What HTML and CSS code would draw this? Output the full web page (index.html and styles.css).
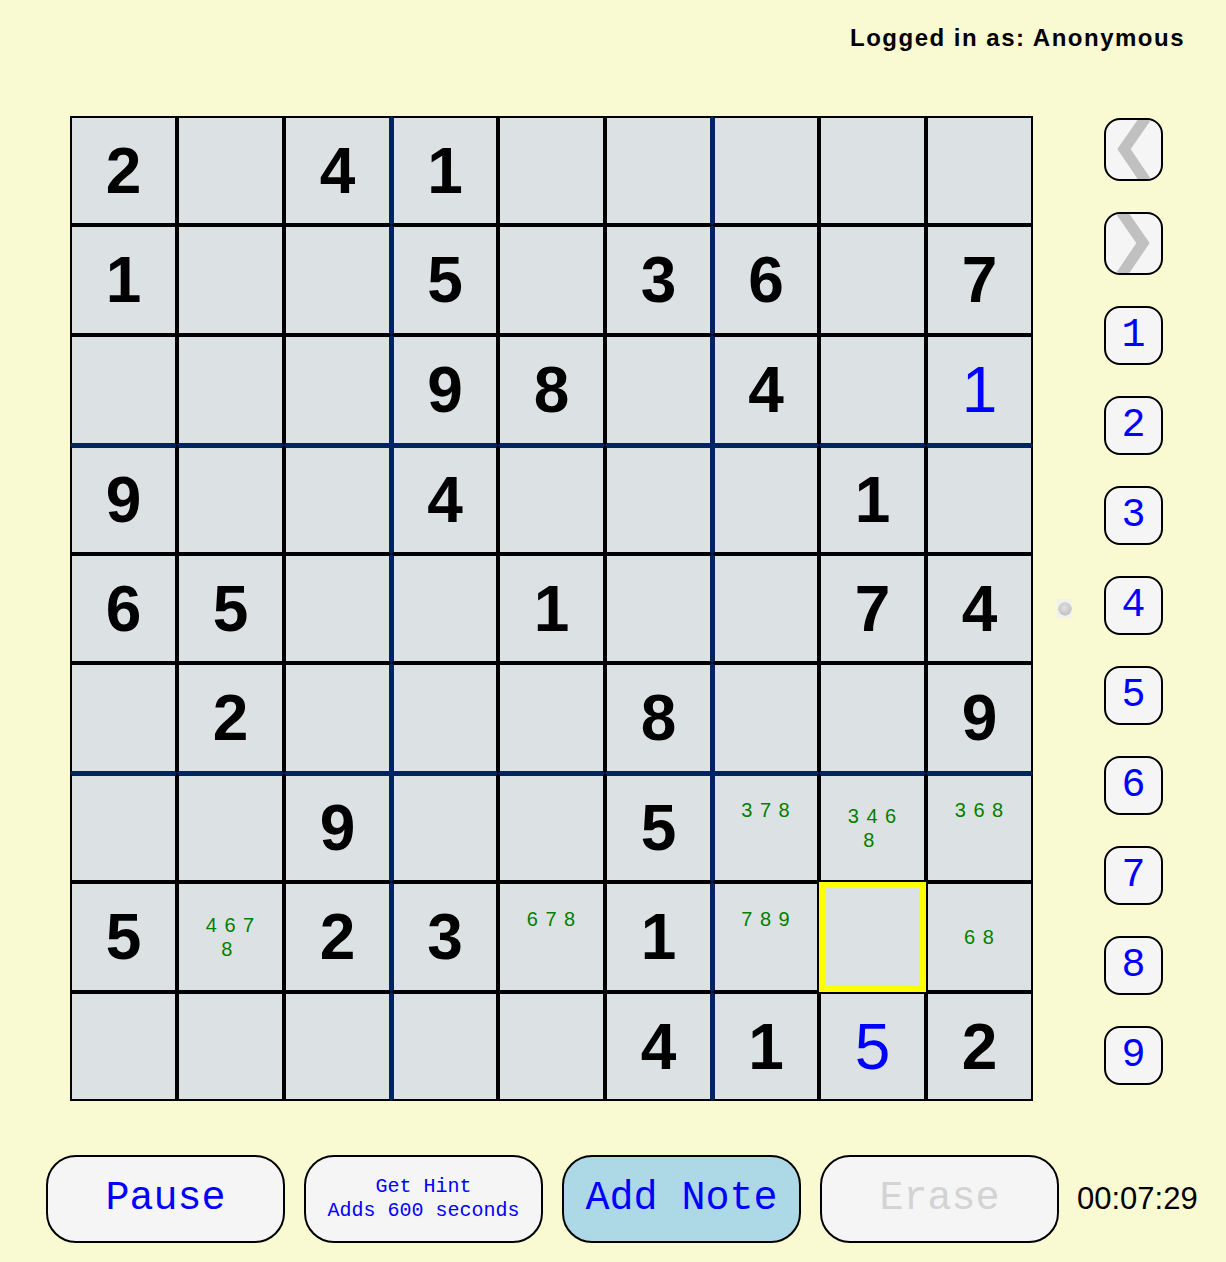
FILE: index.html
```html
<!DOCTYPE html>
<html>
<head>
<meta charset="utf-8">
<title>Sudoku</title>
<link rel="stylesheet" href="styles.css">
</head>
<body>
<div class="page">
  <header class="topbar"><span class="login">Logged in as: Anonymous</span></header>
  <main class="board-area">
    <div class="board">
      <div class="cell given">2</div><div class="cell"></div><div class="cell given">4</div><div class="cell given">1</div><div class="cell"></div><div class="cell"></div><div class="cell"></div><div class="cell"></div><div class="cell"></div>
      <div class="cell given">1</div><div class="cell"></div><div class="cell"></div><div class="cell given">5</div><div class="cell"></div><div class="cell given">3</div><div class="cell given">6</div><div class="cell"></div><div class="cell given">7</div>
      <div class="cell"></div><div class="cell"></div><div class="cell"></div><div class="cell given">9</div><div class="cell given">8</div><div class="cell"></div><div class="cell given">4</div><div class="cell"></div><div class="cell entered">1</div>
      <div class="cell given">9</div><div class="cell"></div><div class="cell"></div><div class="cell given">4</div><div class="cell"></div><div class="cell"></div><div class="cell"></div><div class="cell given">1</div><div class="cell"></div>
      <div class="cell given">6</div><div class="cell given">5</div><div class="cell"></div><div class="cell"></div><div class="cell given">1</div><div class="cell"></div><div class="cell"></div><div class="cell given">7</div><div class="cell given">4</div>
      <div class="cell"></div><div class="cell given">2</div><div class="cell"></div><div class="cell"></div><div class="cell"></div><div class="cell given">8</div><div class="cell"></div><div class="cell"></div><div class="cell given">9</div>
      <div class="cell"></div><div class="cell"></div><div class="cell given">9</div><div class="cell"></div><div class="cell"></div><div class="cell given">5</div><div class="cell"><span class="note lift">3 7 8</span></div><div class="cell"><span class="note">3 4 6<br>8&nbsp;</span></div><div class="cell"><span class="note lift">3 6 8</span></div>
      <div class="cell given">5</div><div class="cell"><span class="note">4 6 7<br>8&nbsp;</span></div><div class="cell given">2</div><div class="cell given">3</div><div class="cell"><span class="note lift">6 7 8</span></div><div class="cell given">1</div><div class="cell"><span class="note lift">7 8 9</span></div><div class="cell sel"></div><div class="cell"><span class="note">6 8</span></div>
      <div class="cell"></div><div class="cell"></div><div class="cell"></div><div class="cell"></div><div class="cell"></div><div class="cell given">4</div><div class="cell given">1</div><div class="cell entered">5</div><div class="cell given">2</div>
    </div>
    <nav class="side">
      <button class="side-btn arrow"><svg class="chev" viewBox="0 0 55 59" width="55" height="59"><polyline points="41,-4 18,29 41,63" /></svg></button>
      <button class="side-btn arrow"><svg class="chev" viewBox="0 0 55 59" width="55" height="59"><polyline points="14,-4 37,29 14,63" /></svg></button>
      <button class="side-btn num">1</button>
      <button class="side-btn num">2</button>
      <button class="side-btn num">3</button>
      <button class="side-btn num has-radio">4<span class="radio"><span class="dot"></span></span></button>
      <button class="side-btn num">5</button>
      <button class="side-btn num">6</button>
      <button class="side-btn num">7</button>
      <button class="side-btn num">8</button>
      <button class="side-btn num">9</button>
    </nav>
  </main>
  <footer class="controls">
    <button class="ctl">Pause</button>
    <button class="ctl hint">Get Hint<br>Adds 600 seconds</button>
    <button class="ctl active">Add Note</button>
    <button class="ctl disabled">Erase</button>
    <span class="timer">00:07:29</span>
  </footer>
</div>
</body>
</html>
```

FILE: styles.css
```css
html, body {
  margin: 0;
  padding: 0;
  background: #fafad2;
}
body {
  font-family: "Liberation Sans", Arial, sans-serif;
}
.page {
  width: 1226px;
  height: 1262px;
  overflow: hidden;
}
.topbar {
  display: flex;
  justify-content: flex-end;
  padding: 24px 41px 0 0;
  height: 28px;
}
.login {
  font-size: 24px;
  line-height: 28px;
  font-weight: bold;
  letter-spacing: 1.5px;
  color: #000;
}
.board-area {
  display: flex;
  align-items: flex-start;
  padding-left: 70px;
  margin-top: 64px;
}
.board {
  display: grid;
  grid-template-columns: repeat(9, 107px);
  grid-template-rows: 109px 110px 110px 109px 109px 110px 109px 110px 109px;
}
.cell {
  box-sizing: border-box;
  border: 2px solid #000;
  background: #dce2e3;
  display: flex;
  align-items: center;
  justify-content: center;
  font-size: 64px;
  line-height: 1;
}
/* box lines */
.cell:nth-child(9n+3), .cell:nth-child(9n+6) {
  border-right-color: #002366;
}
.cell:nth-child(9n+4), .cell:nth-child(9n+7) {
  border-left: 3px solid #002366;
}
.cell:nth-child(n+19):nth-child(-n+27),
.cell:nth-child(n+46):nth-child(-n+54) {
  border-bottom-color: #002366;
}
.cell:nth-child(n+28):nth-child(-n+36),
.cell:nth-child(n+55):nth-child(-n+63) {
  border-top: 3px solid #002366;
}
.given {
  font-weight: bold;
  color: #000;
}
.entered {
  font-weight: normal;
  color: #0000ff;
}
.note {
  font-size: 20px;
  line-height: 24px;
  letter-spacing: 1px;
  color: #008000;
  text-align: center;
}
.note.lift {
  margin-bottom: 36px;
}
.cell.sel {
  border-color: #ffff00;
  box-shadow: inset 0 0 0 4px #ffff00;
}
.side {
  display: flex;
  flex-direction: column;
  gap: 31px;
  margin-left: 71px;
  padding-top: 2px;
}
.side-btn {
  box-sizing: border-box;
  width: 59px;
  height: 59px;
  margin: 0;
  padding: 0;
  border: 2px solid #000;
  border-radius: 16px;
  background: #f5f5f5;
  font-family: "Liberation Mono", "Courier New", monospace;
  font-size: 40px;
  color: #0000ff;
  line-height: 1;
  display: flex;
  align-items: center;
  justify-content: center;
}
.side-btn.arrow {
  height: 63px;
  overflow: hidden;
}
.chev {
  display: block;
  flex: none;
}
.chev polyline {
  fill: none;
  stroke: #c0c0c0;
  stroke-width: 11;
  stroke-linejoin: miter;
}
.has-radio {
  position: relative;
}
.radio {
  position: absolute;
  left: -49px;
  top: 21px;
  width: 15px;
  height: 19px;
  background: #f1f1ee;
  display: flex;
  align-items: center;
  justify-content: center;
}
.dot {
  width: 12px;
  height: 12px;
  border-radius: 50%;
  background: radial-gradient(circle at 45% 40%, #e2e2e2 0%, #c8c8c8 60%, #b4b4b4 100%);
  box-shadow: 0 0 0 0.5px #aaa;
}
.controls {
  display: flex;
  align-items: center;
  gap: 19px;
  padding-left: 46px;
  margin-top: 54px;
}
.ctl {
  box-sizing: border-box;
  width: 239px;
  height: 88px;
  margin: 0;
  padding: 0;
  border: 2px solid #000;
  border-radius: 30px;
  background: #f5f5f5;
  font-family: "Liberation Mono", "Courier New", monospace;
  font-size: 40px;
  line-height: 1;
  color: #0000ff;
}
.ctl.hint {
  font-size: 20px;
  line-height: 24px;
}
.ctl.active {
  background: #add8e6;
}
.ctl.disabled {
  color: #d3d3d3;
}
.timer {
  margin-left: -1px;
  font-size: 31px;
  color: #000;
}
```
